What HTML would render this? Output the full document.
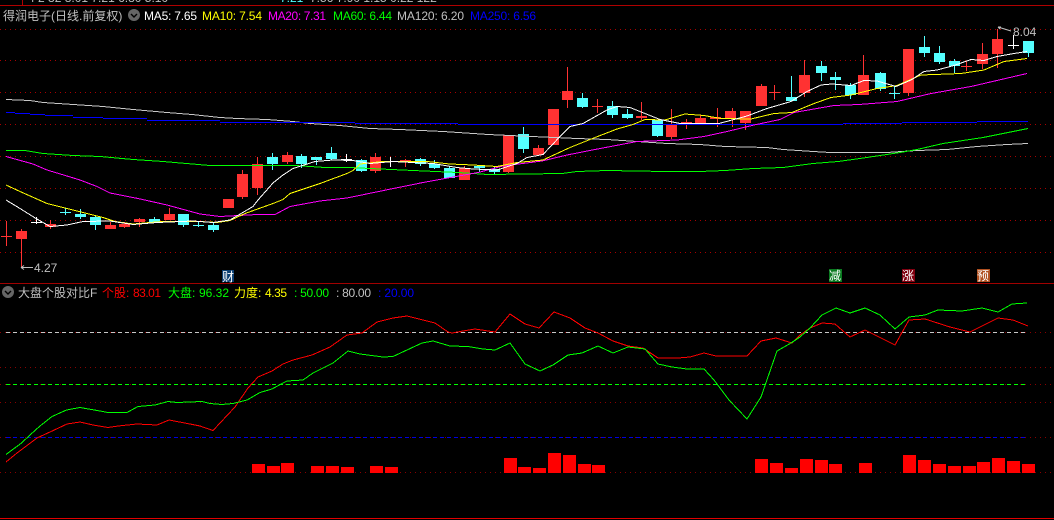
<!DOCTYPE html>
<html><head><meta charset="utf-8"><style>
html,body{margin:0;padding:0;background:#000;width:1054px;height:520px;overflow:hidden}
svg{display:block}
text{font-family:"Liberation Sans","WenQuanYi Zen Hei","Noto Sans CJK SC",sans-serif;font-size:12px}
.l{fill:none;stroke-width:1;stroke-linejoin:miter;shape-rendering:crispEdges}
</style></head><body>
<svg width="1054" height="520" viewBox="0 0 1054 520" xmlns="http://www.w3.org/2000/svg">
<rect width="1054" height="520" fill="#000"/>
<!-- top strip -->
<g fill="#c0c0c0"><text x="28" y="2">4 2   32   8.01   7.21   6.80   5.10</text><text x="280" y="2" fill="#54ffff">7.21</text><text x="310" y="2">7.56   7.90   1.15   0.22   122</text></g>
<g shape-rendering="crispEdges">
<path d="M0 5.5H1054M22.5 0V5" stroke="#b00000" fill="none"/>
<!-- grid -->
<g stroke="#a80000" stroke-dasharray="1 4" fill="none">
<path d="M0 29.5H1054M0 60.5H1054M0 92.5H1054M0 124.5H1054M0 156.5H1054M0 188.5H1054M0 220.5H1054M0 252.5H1054"/>
</g>
<g stroke="#880000" stroke-dasharray="1 4" fill="none">
<path d="M0 332.5H1054M0 367.5H1054M0 384.5H1054M0 402.5H1054M0 437.5H1054M0 472.5H1054"/>
</g>
<path d="M0 283.5H1054" stroke="#a00000" fill="none"/>
<path d="M0 518.5H1054" stroke="#e00000" fill="none"/>
<!-- candles red -->
<path fill="#ff3232" d="M1 236h11v1h-11zM6 221h1v25h-1z
M16 231h11v8h-11zM21 229h1v38h-1z
M45 224h11v3h-11zM50 220h1v9h-1z
M105 225h11v4h-11zM110 222h1v7h-1z
M119 224h11v3h-11zM124 222h1v6h-1z
M134 219h11v3h-11zM139 218h1v9h-1z
M164 214h11v6h-11zM169 208h1v12h-1z
M223 199h11v9h-11z
M237 174h11v23h-11zM242 170h1v29h-1z
M252 164h11v24h-11zM257 157h1v38h-1z
M282 155h11v7h-11zM287 152h1v12h-1z
M370 157h11v14h-11zM375 153h1v20h-1z
M400 160h11v1h-11zM405 159h1v8h-1z
M459 168h11v12h-11zM464 166h1v14h-1z
M503 135h11v37h-11zM508 135h1v38h-1z
M533 148h11v7h-11zM538 145h1v10h-1z
M548 109h11v36h-11z
M562 91h11v9h-11zM567 67h1v41h-1z
M592 106h11v1h-11zM597 99h1v14h-1z
M636 116h11v2h-11zM641 102h1v18h-1z
M666 125h11v12h-11zM671 109h1v30h-1z
M681 122h11v1h-11zM686 119h1v10h-1z
M695 118h11v6h-11zM700 115h1v10h-1z
M710 117h11v2h-11zM717 108h1v19h-1z
M725 111h11v8h-11zM732 108h1v19h-1z
M740 111h11v12h-11zM745 111h1v19h-1z
M756 86h11v20h-11zM761 84h1v22h-1z
M769 92h11v1h-11zM774 85h1v15h-1z
M799 75h11v18h-11zM804 60h1v37h-1z
M858 75h11v20h-11zM863 55h1v40h-1z
M903 49h11v44h-11zM908 49h1v47h-1z
M961 66h11v1h-11zM966 61h1v10h-1z
M977 54h11v10h-11zM982 43h1v26h-1z
M992 39h11v15h-11zM997 29h1v39h-1z"/>
<!-- candles cyan -->
<path fill="#54ffff" d="M60 212h11v1h-11zM65 208h1v7h-1z
M75 214h11v3h-11zM80 209h1v10h-1z
M90 217h11v8h-11zM95 216h1v14h-1z
M149 219h11v3h-11zM154 217h1v6h-1z
M178 214h11v11h-11zM183 214h1v13h-1z
M193 225h11v1h-11zM198 221h1v6h-1z
M208 225h11v5h-11zM213 223h1v9h-1z
M267 157h11v7h-11zM272 153h1v17h-1z
M296 156h11v8h-11zM301 154h1v14h-1z
M311 157h11v3h-11zM316 157h1v8h-1z
M326 153h11v6h-11zM331 147h1v13h-1z
M356 160h11v11h-11zM361 159h1v13h-1z
M415 159h11v5h-11zM420 158h1v8h-1z
M429 164h11v4h-11zM434 160h1v9h-1z
M444 168h11v10h-11zM449 166h1v12h-1z
M474 166h11v2h-11zM479 165h1v7h-1z
M489 169h11v3h-11zM494 167h1v7h-1z
M518 134h11v15h-11zM523 127h1v26h-1z
M577 98h11v9h-11zM582 93h1v15h-1z
M607 106h11v9h-11zM612 101h1v17h-1z
M622 114h11v4h-11zM627 109h1v10h-1z
M652 120h11v16h-11zM657 120h1v17h-1z
M786 97h11v4h-11zM791 76h1v25h-1z
M816 66h11v7h-11zM821 61h1v20h-1z
M830 77h11v3h-11zM835 72h1v18h-1z
M845 85h11v10h-11zM850 83h1v16h-1z
M875 73h11v16h-11zM880 72h1v19h-1z
M889 93h11v1h-11zM894 86h1v13h-1z
M919 47h11v6h-11zM924 36h1v21h-1z
M934 53h11v9h-11zM939 46h1v18h-1z
M949 61h11v5h-11zM954 59h1v14h-1z
M1023 41h11v12h-11zM1028 41h1v16h-1z"/>
<!-- candles white -->
<path fill="#ffffff" d="M31 222h11v1h-11zM36 217h1v7h-1z
M341 159h11v1h-11zM346 154h1v8h-1z
M385 161h11v1h-11zM390 157h1v10h-1z
M1008 45h11v1h-11zM1013 35h1v14h-1z"/>
</g>
<!-- MA lines -->
<polyline class="l" stroke="#c8c8c8" points="6,99.5 30,100.5 43,102.5 73,104.5 103,106.5 133,109.5 167,112.5 192,114.5 220,117.5 237,118.5 267,119.5 293,121.5 310,123.5 340,125.5 350,126.5 370,128.5 400,129.5 443,131.5 473,133.5 488,134.5 532,136.5 577,138.5 607,139.5 637,141.5 667,143.5 700,144.5 725,146.5 767,147.5 783,149.5 813,151.5 830,152.5 887,152.5 917,150.5 947,149.5 977,146.5 1007,144.5 1028,143.5"/>
<g fill="#0000ff" shape-rendering="crispEdges"><rect x="6" y="112" width="9" height="1"/><rect x="15" y="113" width="15" height="1"/><rect x="30" y="114" width="15" height="1"/><rect x="45" y="115" width="28" height="1"/><rect x="73" y="117" width="30" height="1"/><rect x="103" y="118" width="44" height="1"/><rect x="147" y="120" width="73" height="1"/><rect x="220" y="122" width="135" height="1"/><rect x="355" y="123" width="103" height="1"/><rect x="458" y="124" width="385" height="1"/><rect x="843" y="123" width="59" height="1"/><rect x="902" y="122" width="75" height="1"/><rect x="977" y="121" width="51" height="1"/></g>
<polyline class="l" stroke="#00ff00" points="6,150.5 25,150.5 43,153.5 73,155.5 100,156.5 133,159.5 163,161.5 210,165.5 295,165.5 325,167.5 350,167.5 370,168.5 413,170.5 458,172.5 488,174.5 562,173.5 577,171.5 607,170.5 665,171.5 700,171.5 725,170.5 753,168.5 783,167.5 813,163.5 838,161.5 860,158.5 900,152.5 917,149.5 943,143.5 983,137.5 1028,128.5"/>
<polyline class="l" stroke="#ff00ff" points="6,156.5 33,164 47,170 67,176 80,180 97,186.5 110,193 138,198.5 167,205 200,214 220,216.5 257,214.5 275,214.5 290,206.5 320,201 347,198 386,190 423,182.5 478,172.5 503,166 542,161 567,155 595,149.5 637,141.5 677,140 704,136.5 727,131.5 754,125 780,119.5 794,112.5 834,105.5 859,104.5 897,101.5 931,93.5 971,86.5 1027,73.5"/>
<polyline class="l" stroke="#ffff00" points="6,185 20,191.5 47,203.5 67,208.5 87,213.5 103,217.5 115,221.5 133,224 150,222.5 163,221.5 200,221.5 217,222.5 230,220.5 245,213.5 273,203.5 283,199.5 290,193.5 320,183.5 347,173.5 353,170.5 360,164 383,161.5 427,161.5 450,164 473,165 497,166.5 517,162.5 543,160 570,147.5 595,137.5 617,129 633,124.5 645,119.5 665,120 685,114 704,115.5 721,118.5 751,119 774,113.5 792,112.5 814,103.5 831,97.5 851,95 877,88.5 897,85.5 921,75 961,73.5 984,70 1004,61.5 1027,58.5"/>
<polyline class="l" stroke="#ffffff" points="6,200 20,208.5 36,218.5 50,226.5 67,225 83,221.5 110,221 133,224.5 157,222.5 193,221 213,222.5 230,220 253,206.5 258,200 273,183 283,175 293,168.5 315,161.5 333,160 353,160.5 370,163.5 393,161.5 433,163.5 457,167.5 473,169 497,170 517,163.5 527,157.5 543,154.5 560,136.5 570,126.5 583,123.5 607,110 617,106.5 630,107.5 660,119.5 680,123.5 719,123.5 747,116 767,108.5 791,101.5 807,91.5 821,85 832,84 851,85.5 864,80.5 877,81 896,86.5 911,80 924,71.5 937,70 954,65.5 971,59.5 984,60.5 997,56.5 1014,53.5 1027,51.5"/>
<!-- annotations -->
<path d="M21.5 267.5H33M21 267.5l3 -2M21 267.5l3 2" stroke="#c0c0c0" fill="none"/>
<text x="34" y="272" fill="#c0c0c0">4.27</text>
<path d="M998 27L1011 31M998 27l3 0M998 27l2 2" stroke="#c0c0c0" fill="none"/>
<text x="1013" y="36" fill="#c0c0c0">8.04</text>
<!-- markers -->
<rect x="222" y="270" width="12" height="12" fill="#0b3f73"/><text x="222" y="281" fill="#fff">财</text>
<rect x="829" y="269" width="13" height="13" fill="#0a7a20"/><text x="829" y="280" fill="#fff">减</text>
<rect x="902" y="269" width="13" height="13" fill="#800010"/><text x="902" y="280" fill="#fff">涨</text>
<rect x="977" y="269" width="13" height="13" fill="#b05020"/><text x="977" y="280" fill="#fff">预</text>
<!-- header -->
<circle cx="134" cy="15" r="6" fill="#666"/><path d="M131 14l3 3 3-3" stroke="#000" stroke-width="1.4" fill="none"/>
<text x="3" y="20" fill="#c0c0c0">得润电子(日线.前复权)</text>
<text x="144" y="20" fill="#ffffff" textLength="53">MA5: 7.65</text>
<text x="202" y="20" fill="#ffff00" textLength="60">MA10: 7.54</text>
<text x="268" y="20" fill="#ff00ff" textLength="58">MA20: 7.31</text>
<text x="333" y="20" fill="#00ff00" textLength="59">MA60: 6.44</text>
<text x="397" y="20" fill="#c0c0c0" textLength="67">MA120: 6.20</text>
<text x="470" y="20" fill="#0000ff" textLength="66">MA250: 6.56</text>
<!-- lower header -->
<circle cx="8" cy="292" r="6" fill="#666"/><path d="M5 291l3 3 3-3" stroke="#000" stroke-width="1.4" fill="none"/>
<text x="18" y="297" fill="#c0c0c0">大盘个股对比F</text>
<text x="102" y="297" fill="#ff0000">个股:</text><text x="133" y="297" fill="#ff0000" textLength="28">83.01</text>
<text x="168" y="297" fill="#00ff00">大盘:</text><text x="199" y="297" fill="#00ff00" textLength="30">96.32</text>
<text x="234" y="297" fill="#ffff00">力度:</text><text x="265" y="297" fill="#ffff00" textLength="22">4.35</text>
<text x="294" y="297" fill="#00ff00" textLength="35">: 50.00</text>
<text x="336" y="297" fill="#c0c0c0" textLength="35">: 80.00</text>
<text x="378" y="297" fill="#0000ff" textLength="36">: 20.00</text>
<!-- lower dashed -->
<g shape-rendering="crispEdges" fill="none" stroke-dasharray="4 3">
<path d="M6 332.5H1028" stroke="#c8c8c8"/>
<path d="M6 384.5H1028" stroke="#00ff00"/>
<path d="M6 437.5H1028" stroke="#0000e0"/>
</g>
<!-- bars -->
<path fill="#ff0000" shape-rendering="crispEdges" d="M252 464h13v9h-13zM267 466h13v7h-13zM281 463h13v10h-13zM311 466h13v7h-13zM326 466h13v7h-13zM341 467h13v6h-13zM370 466h13v7h-13zM385 467h13v6h-13zM504 458h13v15h-13zM518 467h13v6h-13zM533 468h13v5h-13zM548 453h13v20h-13zM563 455h13v18h-13zM578 464h13v9h-13zM592 465h13v8h-13zM755 459h13v14h-13zM770 463h13v10h-13zM785 468h13v5h-13zM800 459h13v14h-13zM815 460h13v13h-13zM829 464h13v9h-13zM859 463h13v10h-13zM903 455h13v18h-13zM918 460h13v13h-13zM933 464h13v9h-13zM948 466h13v7h-13zM963 466h13v7h-13zM977 462h13v11h-13zM992 458h13v15h-13zM1007 461h13v12h-13zM1022 464h13v9h-13z"/>
<!-- lower lines -->
<polyline class="l" stroke="#ff0000" points="6,462 17,453 37,438 50,432 67,424 80,422 93,425 108,427.5 118,426 137,424 157,425 169,420 190,424 200,426 213,430.5 235,407 248,388 258,377 272,371 283,364 293,360 312,355 330,347 347,335 362,333 377,322 393,318 407,316 423,320 435,323 448,332 452,333 463,331 475,329 495,332 510,314 525,324 539,328 554,312 570,318 585,328 598,333 613,341 628,346 643,348 658,358 678,358 690,357 704,353 716,356 747,356 761,341 776,338 792,343 800,335 810,328 822,323 835,324 850,337 865,330 885,340 895,345 909,320 925,319 950,327 970,332 998,318 1013,320 1028,326"/>
<polyline class="l" stroke="#00ff00" points="6,454.5 21.5,443 30,435 40,426 52,416.5 66.5,410 80,407.5 100,411 108,412.5 127,412.5 138,406.5 155,405 168,401.5 177,402.5 202,401.5 210,403.5 222,404.5 233,403.5 247,400 260,392.5 272,389 283,383 287,381 303,380 313,373 333,363 348,351 360,354 383,357 393,356.5 422,343 433,341 450,346 468,346.5 483,349 495,350 510,343 525,364 540,371 553,365 568,355 582,353 598,346 613,353 628,347 645,349 658,364 672,367 687,369 704,369 714,380 729,400 747,419 761,397 777,351 791,343 800,337 810,328 822,315 836,308 850,313 865,308 880,315 895,329 909,317 925,315 938,310 962,311 982,308 998,312 1012,304 1027,303"/>
</svg>
</body></html>
